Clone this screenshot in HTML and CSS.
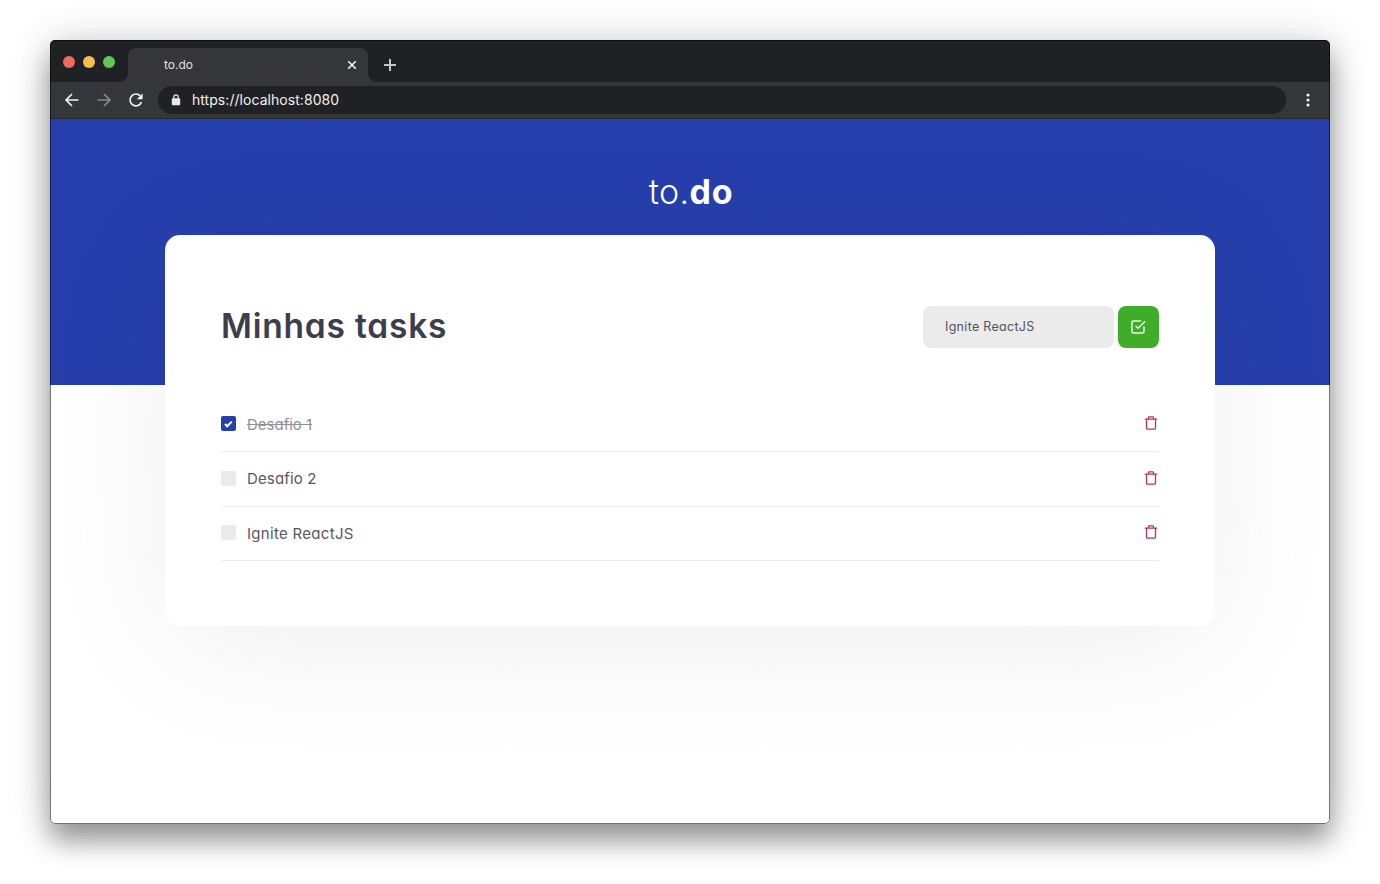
FILE: index.html
```html
<!DOCTYPE html>
<html lang="pt-BR">
<head>
<meta charset="utf-8">
<title>to.do</title>
<link rel="stylesheet" href="styles.css">
</head>
<body>
<div class="window">
  <div class="tabbar">
    <div class="lights"><i class="light red"></i><i class="light yellow"></i><i class="light green"></i></div>
    <div class="tab">
      <span>to.do</span>
      <svg class="tab-close" width="10" height="10" viewBox="0 0 10 10"><path d="M1.2 1.2l7.6 7.6M8.8 1.2L1.2 8.8"/></svg>
    </div>
    <svg class="new-tab" width="12" height="12" viewBox="0 0 12 12"><path d="M6 0v12M0 6h12"/></svg>
  </div>
  <div class="toolbar">
    <svg class="nav" width="16" height="16" viewBox="0 0 16 16"><path d="M14.5 8H2.5M8 2L2 8l6 6"/></svg>
    <svg class="nav dim" width="16" height="16" viewBox="0 0 16 16"><path d="M1.5 8h12M8 2l6 6-6 6"/></svg>
    <svg class="nav reload" width="16" height="16" viewBox="0 0 16 16"><path d="M13.5 10A5.9 5.9 0 1 1 12.3 3.9"/><path class="solid" d="M14.6 1.4v5.8H8.8z"/></svg>
    <div class="address">
      <svg width="10" height="12" viewBox="0 0 10 12"><path class="shackle" d="M2.8 5V3.1a2.2 2.2 0 0 1 4.4 0V5"/><rect x=".8" y="4.2" width="8.4" height="7" rx="1"/></svg>
      <span>https://localhost:8080</span>
    </div>
    <svg class="menu" width="4" height="14" viewBox="0 0 4 14"><circle cx="2" cy="2" r="1.6"/><circle cx="2" cy="7" r="1.6"/><circle cx="2" cy="12" r="1.6"/></svg>
  </div>
  <div class="page">
    <header class="banner"><div class="logo"><span class="logo-light">to.</span><span class="logo-bold">do</span></div></header>
    <main class="card">
      <div class="card-head">
        <h1>Minhas tasks</h1>
        <div class="form">
          <div class="field"><span>Ignite ReactJS</span></div>
          <button class="add" aria-label="Adicionar"><svg width="16" height="16" viewBox="0 0 24 24"><path d="M9 11l3 3L22 4"/><path d="M21 12v7a2 2 0 0 1-2 2H5a2 2 0 0 1-2-2V5a2 2 0 0 1 2-2h11"/></svg></button>
        </div>
      </div>
      <ul class="tasks">
        <li class="done">
          <span class="box"><svg width="9" height="8" viewBox="0 0 9 8"><path d="M1 4l2.2 2.3L7.8 1.6"/></svg></span>
          <span class="label done-label">Desafio 1</span>
          <svg class="trash" width="16" height="16" viewBox="0 0 16 16"><path d="M1.8 4.1h12.4M3.5 4.1v8.9q0 1.2 1.2 1.2h6.6q1.2 0 1.2-1.2V4.1M5.5 3.9V2.5q0-.7.7-.7h3.6q.7 0 .7.7v1.4"/></svg>
        </li>
        <li>
          <span class="box"></span>
          <span class="label">Desafio 2</span>
          <svg class="trash" width="16" height="16" viewBox="0 0 16 16"><path d="M1.8 4.1h12.4M3.5 4.1v8.9q0 1.2 1.2 1.2h6.6q1.2 0 1.2-1.2V4.1M5.5 3.9V2.5q0-.7.7-.7h3.6q.7 0 .7.7v1.4"/></svg>
        </li>
        <li>
          <span class="box"></span>
          <span class="label wide-label">Ignite ReactJS</span>
          <svg class="trash" width="16" height="16" viewBox="0 0 16 16"><path d="M1.8 4.1h12.4M3.5 4.1v8.9q0 1.2 1.2 1.2h6.6q1.2 0 1.2-1.2V4.1M5.5 3.9V2.5q0-.7.7-.7h3.6q.7 0 .7.7v1.4"/></svg>
        </li>
      </ul>
    </main>
  </div>
</div>
</body>
</html>
```

FILE: styles.css
```css
* { box-sizing: border-box; }
body { margin: 0; padding: 40px 50px; height: 884px; overflow: hidden; background: #fff; font-family: Inter, "Liberation Sans", sans-serif; }
svg { display: block; flex: none; fill: none; }
.window { position: relative; width: 1280px; height: 784px; border-radius: 5px; overflow: hidden; background: #fff; box-shadow: 0 17px 26px rgba(0,0,0,.34), 0 3px 44px rgba(0,0,0,.2); display: flex; flex-direction: column; }
.window::after { content: ""; position: absolute; inset: 0; border: 1px solid rgba(0,0,0,.55); border-radius: 5px; pointer-events: none; }
.tabbar { height: 42px; flex: none; display: flex; padding-top: 1px; background: #202124; }
.lights { display: flex; gap: 8px; padding: 15px 13px 0 13px; width: 78px; }
.light { width: 12px; height: 12px; border-radius: 50%; }
.red { background: #ed6a5e; }
.yellow { background: #f5bf4f; }
.green { background: #62c554; }
.tab { position: relative; width: 240px; height: 34px; margin-top: 7px; padding: 0 11px 0 36px; border-radius: 8px 8px 0 0; background: #35363a; color: #e0e1e3; font-size: 12px; display: flex; align-items: center; justify-content: space-between; }
.tab span { padding-bottom: 2px; }
.tab::before, .tab::after { content: ""; position: absolute; bottom: 0; width: 8px; height: 8px; }
.tab::before { left: -8px; background: radial-gradient(circle at 0 0, transparent 7.5px, #35363a 8px); }
.tab::after { right: -8px; background: radial-gradient(circle at 100% 0, transparent 7.5px, #35363a 8px); }
.tab-close { stroke: #f1f1f2; stroke-width: 1.6; }
.new-tab { margin: 18px 0 0 16px; stroke: #c4c5c7; stroke-width: 2; }
.toolbar { height: 37px; flex: none; display: flex; align-items: center; gap: 16px; padding: 0 20px 1px 14px; background: #35363a; border-bottom: 1px solid #26282e; }
.nav { stroke: #f1f1f2; stroke-width: 1.7; }
.dim { stroke: #87888b; }
.solid { fill: #f1f1f2; stroke: none; }
.address { flex: 1; height: 28px; margin-left: -2px; margin-right: 4px; padding: 0 13px; border-radius: 14px; background: #202124; color: #f1f1f2; display: flex; align-items: center; gap: 11px; font-size: 14px; letter-spacing: .05px; }
.address rect { fill: #e8e8e9; }
.shackle { stroke: #e8e8e9; stroke-width: 1.3; }
.menu { fill: #f1f1f2; }
.page { flex: 1; overflow: hidden; font-feature-settings: "cv11" 1; }
.banner { height: 266px; padding-top: 47px; background: #273fad; color: #fff; text-align: center; }
.logo { padding-left: 2px; font-size: 34px; line-height: 52px; }
.logo-light { font-weight: 350; letter-spacing: .4px; }
.logo-bold { font-weight: 700; letter-spacing: .7px; }
.card { position: relative; width: 1050px; height: 390.6px; margin: -149.6px auto 0; padding: 70.6px 56px 0; border-radius: 15px; background: #fff; box-shadow: 0 19px 140px rgba(0,0,0,.065); }
.card-head { display: flex; align-items: center; justify-content: space-between; }
h1 { margin: 0; color: #3d3d4d; font-size: 33.5px; line-height: 41px; font-weight: 600; letter-spacing: .8px; }
.form { display: flex; gap: 4px; }
.field { width: 190.5px; height: 41.5px; padding: 0 22px 1px; border-radius: 8px; background: #ebebeb; color: #545461; font-size: 12.5px; letter-spacing: .3px; display: flex; align-items: center; }
.add { width: 41.5px; height: 41.5px; padding: 0; border: 0; border-radius: 8px; background: #3fad27; display: grid; place-items: center; }
.add svg { stroke: #eaf6e7; stroke-width: 2.2; stroke-linecap: round; stroke-linejoin: round; }
.tasks { list-style: none; margin: 50px 0 0; padding: 0; }
.tasks li { height: 54.5px; padding-bottom: 1px; display: flex; align-items: center; border-bottom: 1px solid #ebebeb; }
.box { width: 15px; height: 15px; margin-right: 11px; border-radius: 2px; background: #ebebeb; display: grid; place-items: center; }
.done .box { background: #273fad; }
.box svg { stroke: #fff; stroke-width: 2; }
.label { flex: 1; padding-top: 1px; color: #575761; font-size: 15px; letter-spacing: .15px; }
.wide-label { letter-spacing: .3px; }
.done-label { color: #909097; text-decoration: line-through; letter-spacing: 0; }
.trash { margin-bottom: 1.5px; stroke: #b83251; stroke-width: 1.3; }
```
